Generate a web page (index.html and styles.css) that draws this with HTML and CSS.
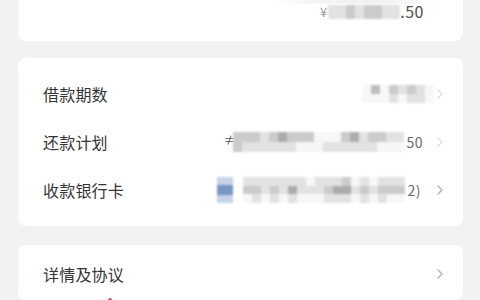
FILE: index.html
```html
<!DOCTYPE html>
<html lang="zh-CN">
<head>
<meta charset="utf-8">
<title>借款详情</title>
<link rel="stylesheet" href="styles.css">
</head>
<body>
<main class="page">
  <section class="card card-top">
    <div class="strip"></div>
    <div class="amount">
      <span class="yen">¥</span>
      <div class="mz mz-amt">
        <i class="c1"></i><i class="c1"></i><i class="c2"></i><i class="c1"></i><i class="c2"></i><i class="c2"></i><i class="c1"></i><i class="c1"></i>
      </div>
      <span class="num">.50</span>
    </div>
  </section>

  <section class="card card-list">
    <div class="row">
      <span class="label">借款期数</span>
      <div class="value">
        <div class="mz mz-r1">
          <i class="c0"></i><i class="c0"></i>
          <i class="c3d"></i><i class="c0"></i>
          <i class="c0"></i><i class="c0"></i>
          <i class="c2"></i><i class="c1"></i>
          <i class="c1"></i><i class="c0"></i>
          <i class="c2"></i><i class="c1"></i>
          <i class="c1"></i><i class="c1"></i>
          <i class="c0"></i><i class="c0"></i>
        </div>
        <svg class="chev faint tight" viewBox="0 0 6 10" width="6" height="10"><polyline points="1,1 5,5 1,9"/></svg>
      </div>
    </div>
    <div class="row">
      <span class="label">还款计划</span>
      <div class="value">
        <span class="glyph">≠</span>
        <div class="mz mz-r2">
          <i class="c2"></i><i class="c2"></i>
          <i class="c2"></i><i class="c1"></i>
          <i class="c2"></i><i class="c1"></i>
          <i class="c1"></i><i class="c1"></i>
          <i class="c2"></i><i class="c1"></i>
          <i class="c3"></i><i class="c1"></i>
          <i class="c2"></i><i class="c1"></i>
          <i class="c2"></i><i class="c0"></i>
          <i class="c2"></i><i class="c0"></i>
          <i class="c0"></i><i class="c0"></i>
          <i class="c0"></i><i class="c1"></i>
          <i class="c0"></i><i class="c1"></i>
          <i class="c2"></i><i class="c1"></i>
          <i class="c3"></i><i class="c1"></i>
          <i class="c1"></i><i class="c1"></i>
          <i class="c2"></i><i class="c1"></i>
          <i class="c2"></i><i class="c0"></i>
          <i class="c1"></i><i class="c0"></i>
          <i class="c1"></i><i class="c0"></i>
        </div>
        <span class="num small">50</span>
        <svg class="chev faint" viewBox="0 0 6 10" width="6" height="10"><polyline points="1,1 5,5 1,9"/></svg>
      </div>
    </div>
    <div class="row">
      <span class="label">收款银行卡</span>
      <div class="value">
        <div class="bank"><i class="b1"></i><i class="b2"></i><i class="b1"></i></div>
        <div class="mz mz-r3">
          <i class="c1"></i><i class="c2"></i><i class="c0"></i>
          <i class="c1"></i><i class="c2"></i><i class="c1"></i>
          <i class="c1"></i><i class="c1"></i><i class="c0"></i>
          <i class="c1"></i><i class="c2"></i><i class="c1"></i>
          <i class="c1"></i><i class="c1"></i><i class="c0"></i>
          <i class="c1"></i><i class="c3"></i><i class="c1"></i>
          <i class="c1"></i><i class="c1"></i><i class="c0"></i>
          <i class="c0"></i><i class="c1"></i><i class="c0"></i>
          <i class="c1"></i><i class="c1"></i><i class="c0"></i>
          <i class="c1"></i><i class="c2"></i><i class="c1"></i>
          <i class="c1"></i><i class="c3"></i><i class="c1"></i>
          <i class="c2"></i><i class="c3"></i><i class="c1"></i>
          <i class="c0"></i><i class="c1"></i><i class="c0"></i>
          <i class="c1"></i><i class="c2"></i><i class="c1"></i>
          <i class="c0"></i><i class="c1"></i><i class="c0"></i>
          <i class="c1"></i><i class="c2"></i><i class="c1"></i>
          <i class="c1"></i><i class="c2"></i><i class="c0"></i>
          <i class="c1"></i><i class="c2"></i><i class="c0"></i>
        </div>
        <span class="num small">2)</span>
        <svg class="chev" viewBox="0 0 6 10" width="6" height="10"><polyline points="1,1 5,5 1,9"/></svg>
      </div>
    </div>
  </section>

  <section class="card card-bottom">
    <div class="row">
      <span class="label">详情及协议</span>
      <div class="value">
        <svg class="chev" viewBox="0 0 6 10" width="6" height="10"><polyline points="1,1 5,5 1,9"/></svg>
      </div>
    </div>
    <div class="row-next">
      <span class="red-dot"></span>
    </div>
  </section>
</main>
</body>
</html>
```

FILE: styles.css
```css
* { box-sizing: border-box; }

html, body {
  margin: 0;
  padding: 0;
  background: #f2f2f2;
}

body {
  width: 480px;
  height: 300px;
  overflow: hidden;
  font-family: "Noto Sans CJK SC", "Noto Sans", sans-serif;
  color: #353535;
}

.page {
  display: flex;
  flex-direction: column;
  padding: 0 17px 0 18px;
}

.card {
  background: #ffffff;
  border-radius: 8px;
}

.card-top {
  height: 41px;
  border-radius: 0 0 8px 8px;
  display: flex;
  flex-direction: column;
  align-items: flex-end;
  padding-right: 39px;
}

.strip {
  width: 150px;
  height: 3px;
  margin-right: 4px;
  background: linear-gradient(90deg, #ffffff 0%, #efefef 30%, #ebebeb 70%, #f6f6f6 100%);
  filter: blur(1px);
}

.amount {
  display: flex;
  align-items: center;
  height: 15px;
  margin-top: 1px;
}

.yen {
  font-size: 13px;
  line-height: 15px;
  color: #9a9a9a;
  margin-right: 1px;
}

.num {
  font-size: 16px;
  line-height: 15px;
  color: #505050;
  letter-spacing: 0.5px;
}

.num.small {
  font-size: 14px;
  color: #6a6a6a;
  margin-left: 2px;
}

.card-list {
  margin-top: 17px;
  padding: 12px 0;
}

.card-bottom {
  margin-top: 19px;
  padding-top: 5px;
  height: 55px;
  overflow: hidden;
}

.row {
  display: flex;
  align-items: center;
  height: 48px;
  padding: 0 20px 0 25px;
}

.label {
  font-size: 16px;
  line-height: 20px;
  color: #353535;
  letter-spacing: 0.2px;
}

.value {
  margin-left: auto;
  display: flex;
  align-items: center;
}

.chev {
  margin-left: 16px;
  fill: none;
  stroke: #b3b3b3;
  stroke-width: 1.4;
  stroke-linecap: round;
  stroke-linejoin: round;
}

.chev.faint {
  opacity: 0.45;
  margin-left: 14px;
}

.chev.tight {
  margin-left: 3px;
}

.glyph {
  font-size: 12px;
  line-height: 12px;
  color: #555;
  align-self: flex-start;
  margin-top: 2px;
  margin-right: -2px;
}

/* pixelated mask */
.mz {
  display: grid;
  grid-auto-flow: column;
  filter: blur(1.1px);
}

.mz i { display: block; }
.mz .c0 { background: #f7f7f7; }
.mz .c1 { background: #e2e2e2; }
.mz .c2 { background: #cbcbcb; }
.mz .c3 { background: #acacac; }
.mz .c3d { background: #bdbdbd; }

.mz-amt {
  grid-template-rows: 14px;
  grid-auto-columns: 9px;
}

.mz-r1 {
  grid-template-rows: repeat(2, 9px);
  grid-auto-columns: 9px;
}

.mz-r2 {
  grid-template-rows: repeat(2, 10px);
  grid-auto-columns: 9px;
}

.mz-r3 {
  grid-template-rows: repeat(3, 8.5px);
  grid-auto-columns: 9px;
}

.bank {
  display: grid;
  grid-template-rows: 8px 10px 8px;
  width: 16px;
  margin-right: 10px;
  filter: blur(0.8px);
}

.bank .b1 { display: block; background: #c6d3e8; }
.bank .b2 { display: block; background: #7995c4; }

.row-next {
  display: flex;
  padding-left: 90px;
}

.red-dot {
  display: block;
  width: 4px;
  height: 4px;
  border-radius: 50%;
  background: #e05050;
  filter: blur(0.5px);
}
```
